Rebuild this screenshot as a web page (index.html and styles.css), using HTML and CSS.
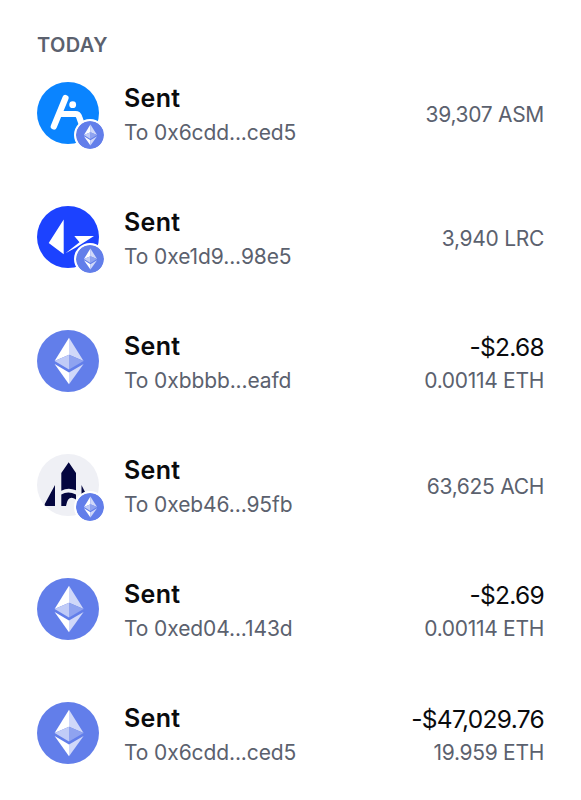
FILE: index.html
```html
<!DOCTYPE html>
<html lang="en">
<head>
  <meta charset="UTF-8" />
  <meta name="viewport" content="width=device-width, initial-scale=1" />
  <title>Transactions</title>
  <link rel="stylesheet" href="styles.css">
</head>
<body>
  <svg class="defs">
    <symbol id="eth" viewBox="0 0 62 62">
      <circle cx="31" cy="31" r="31" fill="#627eea"/>
      <path d="M32 7.7V24.7L17.6 31z" fill="#fff"/>
      <path d="M32 7.7V24.7L46.6 31z" fill="#d0d8f9"/>
      <path d="M17.6 31L32 24.7V39.6z" fill="#c0cbf7"/>
      <path d="M46.6 31L32 24.7V39.6z" fill="#8fa3f0"/>
      <path d="M17.6 34L32 42.6V54.3z" fill="#fff"/>
      <path d="M46.6 34L32 42.6V54.3z" fill="#d0d8f9"/>
    </symbol>
  </svg>

  <h1 class="day">TODAY</h1>
  <ul class="list">
    <li class="row">
      <div class="icon">
        <svg class="coin" viewBox="0 0 62 62">
          <circle cx="31" cy="31" r="31" fill="#0a84ff"/>
          <path d="M28.5 16L16.8 44.5M22.5 32H38.5Q41.3 32 42.2 35L45 43" fill="none" stroke="#fff" stroke-width="6.2" stroke-linecap="round" stroke-linejoin="round"/>
          <circle cx="35.7" cy="22.7" r="3.4" fill="#fff"/>
        </svg>
        <svg class="badge"><use href="#eth"/></svg>
      </div>
      <div class="info">
        <div class="title">Sent</div>
        <div class="sub">To 0x6cdd...ced5</div>
      </div>
      <div class="amount">
        <div class="sub">39,307 ASM</div>
      </div>
    </li>
    <li class="row">
      <div class="icon">
        <svg class="coin" viewBox="0 0 62 62">
          <circle cx="31" cy="31" r="31" fill="#1c42ff"/>
          <path d="M26.7 13.5V48.3L11.7 37zM28.5 47.3L42.5 36.3L37.3 30H57L39 41.5z" fill="#fff"/>
        </svg>
        <svg class="badge"><use href="#eth"/></svg>
      </div>
      <div class="info">
        <div class="title">Sent</div>
        <div class="sub">To 0xe1d9...98e5</div>
      </div>
      <div class="amount">
        <div class="sub">3,940 LRC</div>
      </div>
    </li>
    <li class="row">
      <div class="icon">
        <svg class="coin"><use href="#eth"/></svg>
      </div>
      <div class="info">
        <div class="title">Sent</div>
        <div class="sub">To 0xbbbb...eafd</div>
      </div>
      <div class="amount">
        <div class="value">-$2.68</div>
        <div class="sub">0.00114 ETH</div>
      </div>
    </li>
    <li class="row">
      <div class="icon">
        <svg class="coin" viewBox="0 0 62 62">
          <circle cx="31" cy="31" r="31" fill="#eff0f5"/>
          <path d="M31.7 8.3L39 19V36.3Q31 33 24.3 36.8V19zM18 31V52H9Q7 52 8 49.5zM44.5 31L52 46H44.5zM24.3 52V40.5Q31 36.5 39 40.5V45.5Q31 40 29 52z" fill="#04063f"/>
        </svg>
        <svg class="badge"><use href="#eth"/></svg>
      </div>
      <div class="info">
        <div class="title">Sent</div>
        <div class="sub">To 0xeb46...95fb</div>
      </div>
      <div class="amount">
        <div class="sub">63,625 ACH</div>
      </div>
    </li>
    <li class="row">
      <div class="icon">
        <svg class="coin"><use href="#eth"/></svg>
      </div>
      <div class="info">
        <div class="title">Sent</div>
        <div class="sub">To 0xed04...143d</div>
      </div>
      <div class="amount">
        <div class="value">-$2.69</div>
        <div class="sub">0.00114 ETH</div>
      </div>
    </li>
    <li class="row">
      <div class="icon">
        <svg class="coin"><use href="#eth"/></svg>
      </div>
      <div class="info">
        <div class="title">Sent</div>
        <div class="sub">To 0x6cdd...ced5</div>
      </div>
      <div class="amount">
        <div class="value">-$47,029.76</div>
        <div class="sub">19.959 ETH</div>
      </div>
    </li>
  </ul>
</body>
</html>
```
FILE: styles.css
```css
body {
  margin: 0;
  padding: 33px 37px 0;
  background: #fff;
  color: #0a0b0d;
  font-family: Inter, sans-serif;
}
.defs {
  display: block;
  width: 0;
  height: 0;
}
.day {
  margin: 0;
  font-size: 20px;
  line-height: 25px;
  font-weight: 600;
  letter-spacing: 0.4px;
  color: #5b616e;
}
.list {
  list-style: none;
  margin: -7px 0 0;
  padding: 0;
}
.row {
  display: flex;
  align-items: center;
  height: 124px;
}
.icon {
  position: relative;
  width: 62px;
  height: 62px;
  margin-right: 25px;
}
.coin {
  display: block;
  width: 62px;
  height: 62px;
}
.badge {
  position: absolute;
  left: 37px;
  top: 37px;
  width: 28px;
  height: 28px;
  border: 2px solid #fff;
  border-radius: 50%;
  background: #fff;
}
.info {
  flex: 1;
  padding-top: 6px;
}
.title {
  padding-bottom: 2px;
  font-size: 25px;
  line-height: 32px;
  font-weight: 600;
  letter-spacing: 0.3px;
}
.value {
  padding-top: 1px;
  font-size: 24.5px;
  line-height: 34px;
  letter-spacing: -0.7px;
}
.sub {
  font-size: 21px;
  line-height: 34px;
  color: #5b616e;
  letter-spacing: -0.1px;
}
.amount {
  padding-top: 4px;
  text-align: right;
}
.amount .sub {
  letter-spacing: -0.3px;
}
```
